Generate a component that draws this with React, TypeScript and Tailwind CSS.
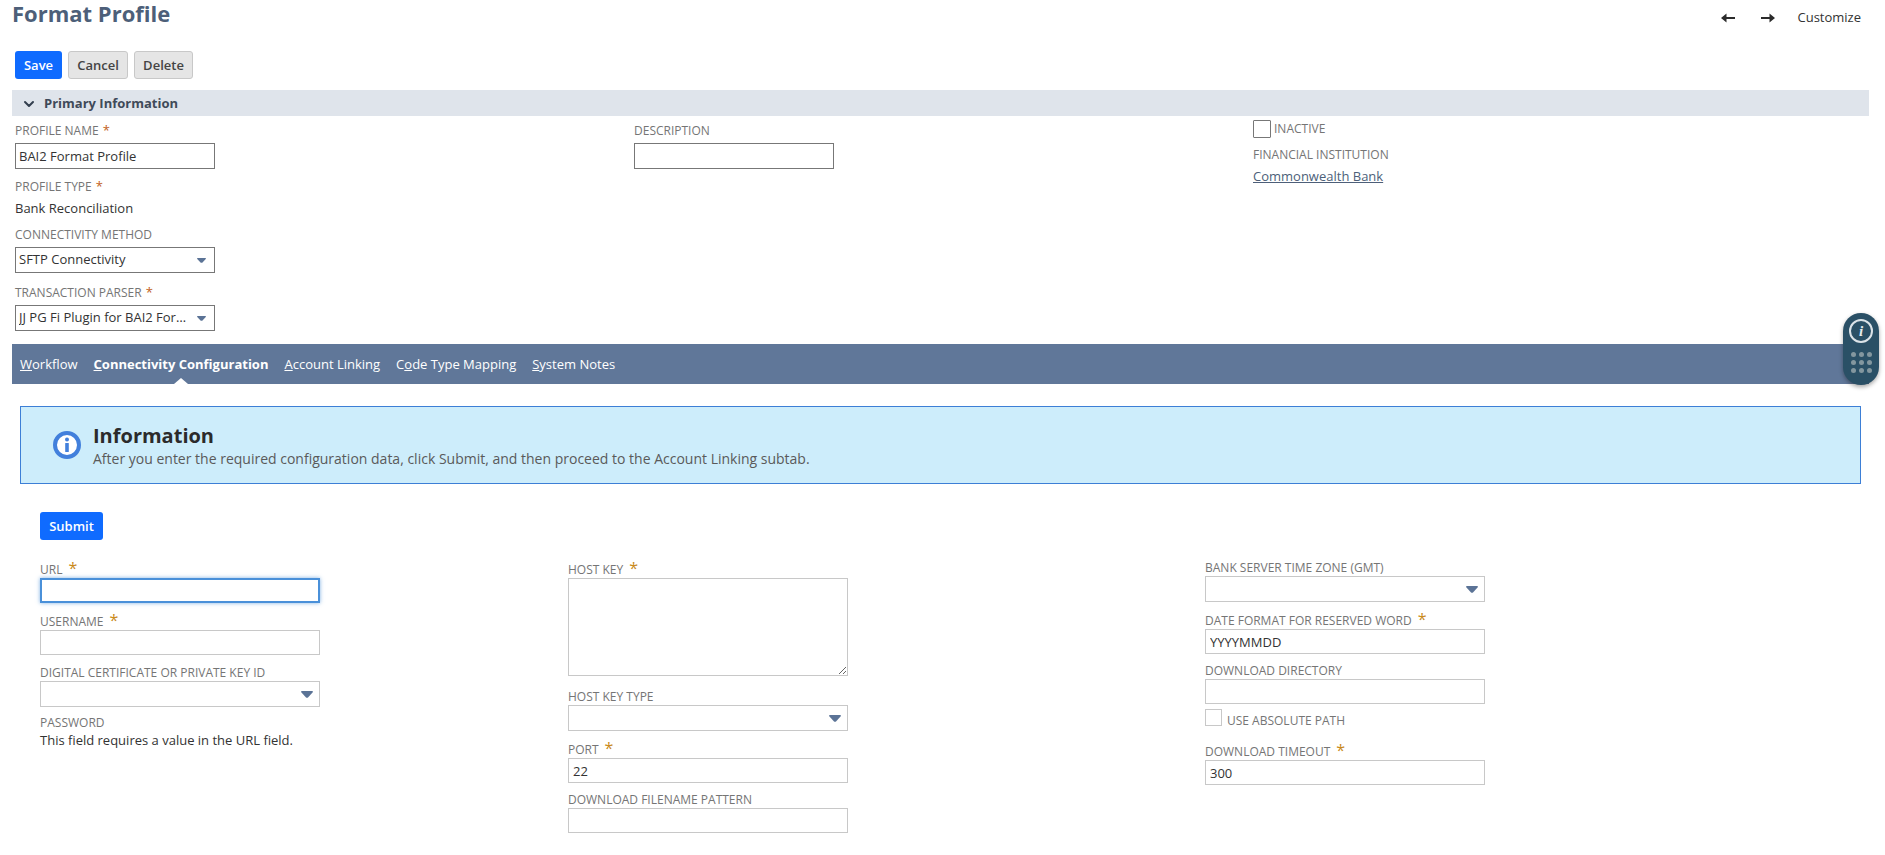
import React from 'react';
import { ChevronDown } from 'lucide-react';

const Star = ({ big }: { big?: boolean }) =>
  big ? (
    <span className="ml-[6px] text-[16px] leading-[12px] relative top-[-2px] text-[#c98a1a]">*</span>
  ) : (
    <span className="ml-[4px] text-[13px] text-[#c2601a]">*</span>
  );

const Caret = ({ small }: { small?: boolean }) => (
  <svg width={small ? 9 : 12} height={small ? 5 : 7} viewBox="0 0 12 7" preserveAspectRatio="none" className="shrink-0">
    <path d="M0 1 Q0 0 1 0 H11 Q12 0 12 1 L7 6.5 Q6 7 5 6.5 Z" fill="#5b7396" />
  </svg>
);

const Arrow = ({ left }: { left?: boolean }) => (
  <svg width="14" height="10" viewBox="0 0 14 10" className={left ? '' : 'rotate-180'}>
    <path d="M0 5 L5.5 0.5 V4 H14 V6 H5.5 V9.5 Z" fill="#2b2b2b" />
  </svg>
);

// top form uses darker boxes, subtab form uses the light ones
const topBox = 'w-[200px] h-[26px] border border-[#777777] bg-white px-[3px] text-[13px] text-[#333333] outline-none';
const subBox = 'w-[280px] h-[25px] border border-[#c8c8c8] bg-white px-[4px] text-[13px] text-[#333333] outline-none';

const TopLabel = ({ text, req, className }: { text: string; req?: boolean; className?: string }) => (
  <div className={`h-[20px] flex items-center text-[12px] text-[#757575] ${className ?? ''}`}>
    {text}
    {req && <Star />}
  </div>
);

const SubLabel = ({ text, req, className }: { text: string; req?: boolean; className?: string }) => (
  <div className={`h-[17px] flex items-center text-[12px] text-[#757575] ${className ?? ''}`}>
    {text}
    {req && <Star big />}
  </div>
);

const TopSelect = ({ value }: { value: string }) => (
  <div className={`${topBox} flex items-center justify-between pr-[8px]`}>
    <span className="truncate">{value}</span>
    <span className="ml-[9px] flex">
      <Caret small />
    </span>
  </div>
);

const SubSelect = () => (
  <div className="w-[280px] h-[26px] border border-[#c8c8c8] bg-white flex items-center justify-end pr-[6px]">
    <Caret />
  </div>
);

const SubInput = ({ value }: { value?: string }) => (
  <input readOnly value={value ?? ''} className={`${subBox} block`} />
);

const Tab = ({ pre, u, post, active }: { pre?: string; u: string; post: string; active?: boolean }) => (
  <div className={`relative h-full flex items-center pt-[1px] text-[13px] text-white ${active ? 'font-bold' : ''}`}>
    <span>
      {pre}
      <span className="underline">{u}</span>
      {post}
    </span>
    {active && (
      <span className="absolute bottom-0 left-1/2 -ml-[7px] w-0 h-0 border-x-[7px] border-x-transparent border-b-[6px] border-b-white" />
    )}
  </div>
);

export default function App() {
  return (
    <div className="relative w-[1885px] h-[855px] overflow-hidden bg-white font-['Open_Sans',sans-serif] text-[#333333]">
      {/* Title row */}
      <div className="h-[51px] pl-[12px] pr-[24px] flex justify-between items-start">
        <h1 className="text-[22px] leading-[26px] font-bold text-[#4d5f79]">Format Profile</h1>
        <div className="flex items-center h-[36px] text-[13px] text-[#333333]">
          <Arrow left />
          <span className="ml-[26px] flex">
            <Arrow />
          </span>
          <span className="ml-[22px]">Customize</span>
        </div>
      </div>

      {/* Buttons */}
      <div className="pl-[15px] flex gap-[6px] h-[28px]">
        <button className="w-[47px] pt-[1px] rounded-[3px] bg-[#0f6bff] text-white text-[13px] font-semibold">Save</button>
        <button className="w-[60px] pt-[1px] rounded-[3px] bg-[#e5e5e5] border border-[#c8c8c8] text-[#444444] text-[13px] font-semibold">Cancel</button>
        <button className="w-[59px] pt-[1px] rounded-[3px] bg-[#e5e5e5] border border-[#c8c8c8] text-[#444444] text-[13px] font-semibold">Delete</button>
      </div>

      {/* Primary Information */}
      <div className="mt-[11px] ml-[12px] mr-[16px] h-[26px] bg-[#dfe4eb] flex items-center pl-[9px] pt-[1px]">
        <ChevronDown size={16} strokeWidth={3} className="text-[#333f4f]" />
        <span className="ml-[7px] text-[13px] font-bold text-[#3f4a59]">Primary Information</span>
      </div>

      <div className="pl-[15px] grid grid-cols-[619px_619px_1fr] h-[215px]">
        <div>
          <TopLabel text="PROFILE NAME" req className="mt-[5px] mb-[2px]" />
          <input readOnly value="BAI2 Format Profile" className={`${topBox} block`} />
          <TopLabel text="PROFILE TYPE" req className="mt-[8px]" />
          <div className="h-[24px] flex items-center text-[13px]">Bank Reconciliation</div>
          <TopLabel text="CONNECTIVITY METHOD" className="mt-[4px] mb-[2px]" />
          <TopSelect value="SFTP Connectivity" />
          <TopLabel text="TRANSACTION PARSER" req className="mt-[10px] mb-[2px]" />
          <TopSelect value="JJ PG Fi Plugin for BAI2 Format" />
        </div>
        <div>
          <TopLabel text="DESCRIPTION" className="mt-[5px] mb-[2px]" />
          <input readOnly className={`${topBox} block`} />
        </div>
        <div>
          <div className="mt-[3px] flex items-center">
            <span className="w-[18px] h-[18px] border border-[#777777] bg-white rounded-[1px]" />
            <span className="ml-[3px] pt-[1px] text-[12px] text-[#757575]">INACTIVE</span>
          </div>
          <TopLabel text="FINANCIAL INSTITUTION" className="mt-[7px]" />
          <a className="block mt-[1px] text-[13px] leading-[20px] text-[#4d5f79] underline">Commonwealth Bank</a>
        </div>
      </div>

      {/* Subtabs */}
      <div className="mt-[13px] ml-[12px] mr-[16px] h-[40px] bg-[#607799] flex items-center pl-[8px] gap-[16px]">
        <Tab u="W" post="orkflow" />
        <Tab u="C" post="onnectivity Configuration" active />
        <Tab u="A" post="ccount Linking" />
        <Tab pre="C" u="o" post="de Type Mapping" />
        <Tab u="S" post="ystem Notes" />
      </div>

      {/* Information banner */}
      <div className="mt-[22px] ml-[20px] mr-[24px] h-[78px] border border-[#3d7fd6] bg-[#cdedfb] flex items-center pl-[32px]">
        <svg width="28" height="28" viewBox="0 0 28 28" className="shrink-0">
          <circle cx="14" cy="14" r="12" fill="#ffffff" stroke="#4280dc" strokeWidth="4" />
          <rect x="12.2" y="12" width="3.6" height="9" rx="0.5" fill="#4280dc" />
          <circle cx="14" cy="8.6" r="2" fill="#4280dc" />
        </svg>
        <div className="ml-[12px] pt-[2px]">
          <div className="text-[20px] leading-[26px] font-bold text-[#2b2b2b]">Information</div>
          <div className="text-[14px] leading-[20px] text-[#5a5a5a]">
            After you enter the required configuration data, click Submit, and then proceed to the Account Linking subtab.
          </div>
        </div>
      </div>

      {/* Connectivity form */}
      <div className="pl-[40px]">
        <button className="mt-[28px] block w-[63px] h-[28px] pt-[1px] rounded-[3px] bg-[#0f6bff] text-white text-[13px] font-semibold">Submit</button>
        <div className="mt-[20px] grid grid-cols-[528px_637px_1fr]">
          <div>
            <SubLabel text="URL" req className="mt-[1px]" />
            <input
              readOnly
              className="block w-[280px] h-[25px] border-2 border-[#4a90d9] bg-white outline-none shadow-[0_0_4px_rgba(74,144,217,0.7)]"
            />
            <SubLabel text="USERNAME" req className="mt-[10px]" />
            <SubInput />
            <SubLabel text="DIGITAL CERTIFICATE OR PRIVATE KEY ID" className="mt-[9px]" />
            <SubSelect />
            <SubLabel text="PASSWORD" className="mt-[7px]" />
            <div className="text-[13px] leading-[18px]">This field requires a value in the URL field.</div>
          </div>
          <div>
            <SubLabel text="HOST KEY" req className="mt-[1px]" />
            <textarea readOnly className="block w-[280px] h-[98px] border border-[#c8c8c8] bg-white outline-none resize" />
            <SubLabel text="HOST KEY TYPE" className="mt-[12px]" />
            <SubSelect />
            <SubLabel text="PORT" req className="mt-[10px]" />
            <SubInput value="22" />
            <SubLabel text="DOWNLOAD FILENAME PATTERN" className="mt-[8px]" />
            <SubInput />
          </div>
          <div>
            <SubLabel text="BANK SERVER TIME ZONE (GMT)" className="mt-[-1px]" />
            <SubSelect />
            <SubLabel text="DATE FORMAT FOR RESERVED WORD" req className="mt-[10px]" />
            <SubInput value="YYYYMMDD" />
            <SubLabel text="DOWNLOAD DIRECTORY" className="mt-[8px]" />
            <SubInput />
            <div className="mt-[5px] flex items-start">
              <span className="w-[17px] h-[17px] border border-[#c8c8c8] bg-white" />
              <span className="ml-[5px] mt-[4px] text-[12px] leading-[16px] text-[#757575]">USE ABSOLUTE PATH</span>
            </div>
            <SubLabel text="DOWNLOAD TIMEOUT" req className="mt-[14px]" />
            <SubInput value="300" />
          </div>
        </div>
      </div>

      {/* Floating help widget */}
      <div className="absolute left-[1843px] top-[313px] w-[36px] h-[72px] rounded-full bg-[#2a5066] shadow-[0_2px_4px_rgba(0,0,0,0.35)] flex flex-col items-center pt-[6px]">
        <div className="w-[24px] h-[24px] rounded-full border-2 border-[#dbe3e8] flex items-center justify-center font-['Liberation_Serif',serif] italic font-bold text-[15px] leading-none text-[#e6ecef]">
          i
        </div>
        <div className="mt-[9px] grid grid-cols-3 gap-[3px]">
          {Array.from({ length: 9 }).map((_, i) => (
            <span key={i} className="w-[5px] h-[5px] rounded-full bg-[#83979f]" />
          ))}
        </div>
      </div>
    </div>
  );
}
